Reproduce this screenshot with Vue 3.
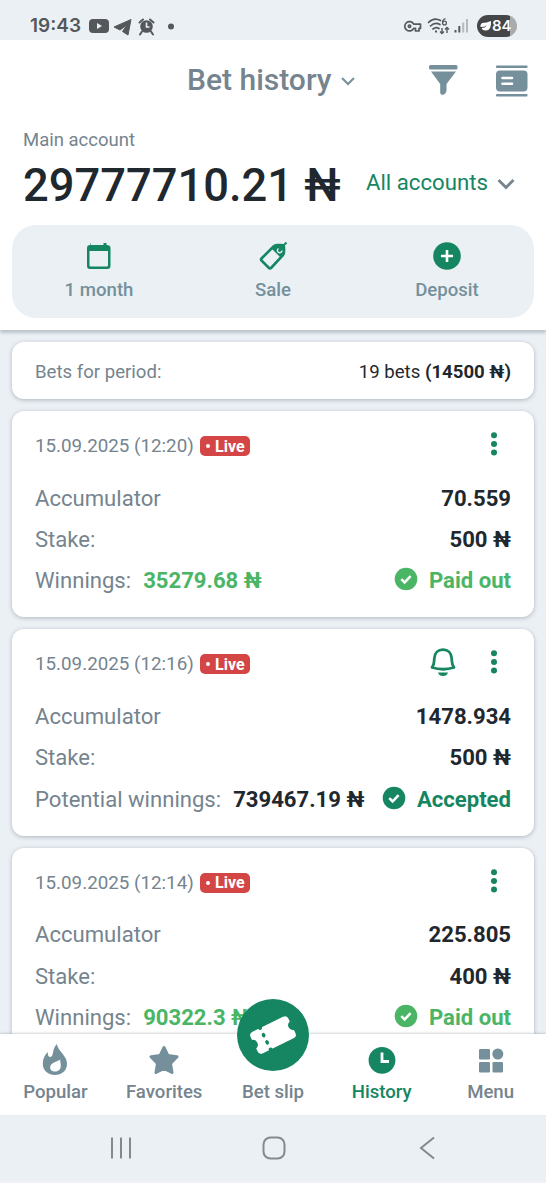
<script setup>
const bets = [
  { time: '12:20', odds: '70.559', stake: '500 ₦', label: 'Winnings:', sum: '35279.68 ₦', paid: true },
  { time: '12:16', odds: '1478.934', stake: '500 ₦', label: 'Potential winnings:', sum: '739467.19 ₦', paid: false },
  { time: '12:14', odds: '225.805', stake: '400 ₦', label: 'Winnings:', sum: '90322.3 ₦', paid: true },
]
</script>

<template>
  <div class="phone">
    <div class="status">
      <span class="clock">19:43</span>
      <svg class="st-left" width="90" height="24" viewBox="0 0 90 24" fill="#55585b">
        <rect x="1" y="5" width="20" height="14" rx="4" />
        <path d="M9 9l5 3-5 3z" fill="#ebf0f5" />
        <path d="M26 13L43 5.500 40 21 34.500 17.500 39 11 32 16z" stroke="#55585b" stroke-linejoin="round" />
        <circle cx="58.500" cy="12.500" r="6.300" />
        <path d="M54 17.500l-2 3M63 17.500l2 3M51.500 8.500l3.500-3M65.500 8.500l-3.500-3" stroke="#55585b" stroke-width="2" stroke-linecap="round" />
        <path d="M58.500 8.500v4.500h3" fill="none" stroke="#ebf0f5" stroke-width="1.600" />
        <circle cx="83" cy="12.500" r="3" />
      </svg>
      <svg class="st-right" width="72" height="24" viewBox="0 0 72 24" fill="none" stroke="#55585b" stroke-width="1.700">
        <path d="M12.700 10.200A4.700 4.700 0 1 0 12.700 14.300H14.500V17H18V14.300H19.500V10.200z" stroke-linejoin="round" />
        <circle cx="8.500" cy="12.200" r="1.200" />
        <path d="M27.500 8.500Q33 2.800 39.500 6.500M29.500 12Q34 7.500 39 10.500M32 15Q35 12.500 38 14.500" stroke-linecap="round" />
        <path d="M34 17.500h2" stroke-width="2" />
        <path d="M44.500 4.500Q41.500 5.500 41.500 8.500" stroke-width="1.300" /><circle cx="43.500" cy="9" r="1.900" stroke-width="1.300" />
        <path d="M41 14v5.500M39 17.500l2 2 2-2M46 19v-5.500M44 15.500l2-2 2 2" stroke-width="1.400" />
        <path d="M54.500 18.500V16M58.300 18.500V12" stroke-width="2" />
        <path d="M62.200 18.500V8.500M66 18.500V5" stroke="#b5babf" stroke-width="2" />
      </svg>
      <div class="battery">
        <svg width="13" height="14" viewBox="0 0 13 14" fill="#fff"><path d="M3 4Q8 4 12 2Q12.500 11.500 7 11.500Q3.500 11.800 2.500 9Q6 9 8 6.500Q5 8 1.500 8Q1 5.500 3 4z" /></svg>
        <span>84</span>
      </div>
    </div>

    <header class="top">
      <div class="titlebar">
        <span class="title">Bet history</span>
        <svg class="title-arrow" width="16" height="12" viewBox="0 0 16 12" fill="none" stroke="#75909b" stroke-width="2"><path d="M2 3l6 6 6-6" /></svg>
        <svg class="funnel" width="30" height="32" viewBox="0 0 30 32" fill="#75909b">
          <rect x="1" y="1" width="28.500" height="4.500" rx="1.500" />
          <path d="M3 7.500H28L18.500 20V26.500Q18 30 15 30.800Q12 31 12.200 28V20z" />
        </svg>
        <svg class="layout" width="32" height="32" viewBox="0 0 32 32" fill="#75909b">
          <rect x="0" y="0.500" width="31.500" height="2.500" rx=".8" /><rect x="0" y="29" width="31.500" height="2.500" rx=".8" />
          <rect x="0" y="5.500" width="31.500" height="21" rx="4" />
          <path d="M6.500 13H16M6.500 18.700H16" stroke="#fff" stroke-width="2.600" stroke-linecap="round" />
        </svg>
      </div>
      <div class="acc-label">Main account</div>
      <div class="acc-row">
        <span class="balance">29777710.21 ₦</span>
        <span class="all">All accounts</span>
        <svg class="all-arrow" width="18" height="14" viewBox="0 0 18 14" fill="none" stroke="#75848e" stroke-width="2.800"><path d="M1.500 3l7.500 7.500L16.500 3" /></svg>
      </div>
      <div class="actions">
        <div class="action">
          <svg width="30" height="32" viewBox="0 0 30 32" fill="#158661">
            <path fill-rule="evenodd" d="M6.500 3V5H19.500V3H22.500V5Q26.500 5 26.500 8V26Q26.500 29 23.500 29H6Q3 29 3 26V8Q3 5 6 5V3zM5.500 11V25.500Q5.500 26.500 6.500 26.500H23Q24 26.500 24 25.500V11z" />
          </svg>
          <span>1 month</span>
        </div>
        <div class="action">
          <svg width="32" height="32" viewBox="0 0 32 32">
            <path d="M4.500 18.500L16.500 6.500Q18 5 20 5H24Q27 5 27 8V12Q27 14 25.500 15.700L14.500 27.500Q13 29 11.500 27.500L4.500 20.500Q3.500 19.500 4.500 18.500z" fill="none" stroke="#158661" stroke-width="2.600" />
            <path d="M16 6H27V14L23.500 17.500L14.500 8.500z" fill="#158661" />
            <path d="M25 7l4.500-4.500" stroke="#158661" stroke-width="2" />
            <path d="M21.500 8.500A2.300 2.300 0 1 0 25 10.500" fill="none" stroke="#ebf0f5" stroke-width="1.400" />
          </svg>
          <span>Sale</span>
        </div>
        <div class="action">
          <svg width="32" height="32" viewBox="0 0 32 32"><circle cx="16" cy="16" r="13.800" fill="#158661" /><path d="M16 10v12M10 16h12" stroke="#fff" stroke-width="2.600" /></svg>
          <span>Deposit</span>
        </div>
      </div>
    </header>

    <main class="list">
      <div class="card period">
        <span class="muted">Bets for period:</span>
        <span class="period-sum">19 bets <b>(14500 ₦)</b></span>
      </div>
      <div v-for="b in bets" :key="b.time" class="card bet">
        <div class="bet-head">
          <span class="date">15.09.2025 ({{ b.time }})</span>
          <span class="live"><i></i>Live</span>
          <svg v-if="!b.paid" class="bell" width="28" height="30" viewBox="0 0 28 30">
            <path d="M3 20.500C5.500 17 5 15 5.300 11.500C5.600 6 9 2.700 14 2.700S22.400 6 22.700 11.500C23 15 22.500 17 25 20.500Q14 24 3 20.500z" fill="none" stroke="#158661" stroke-width="2.800" stroke-linejoin="round" />
            <path d="M9 25.500H19Q18 29 14 29T9 25.500z" fill="#158661" />
          </svg>
          <svg class="dots" width="8" height="26" viewBox="0 0 8 26" fill="#158661"><circle cx="4" cy="4.200" r="3" /><circle cx="4" cy="12.900" r="3" /><circle cx="4" cy="21.600" r="3" /></svg>
        </div>
        <div class="line"><span class="key">Accumulator</span><b>{{ b.odds }}</b></div>
        <div class="line"><span class="key">Stake:</span><b>{{ b.stake }}</b></div>
        <div class="line">
          <span class="key">{{ b.label }}</span>
          <b class="sum" :class="{ green: b.paid }">{{ b.sum }}</b>
          <span class="state" :class="b.paid ? 'green' : 'dark'">
            <svg width="24" height="24" viewBox="0 0 24 24"><circle cx="12" cy="12" r="11.300" fill="currentColor" /><path d="M7.300 12.200l3.300 3.200 6-6.200" fill="none" stroke="#fff" stroke-width="2.500" /></svg>
            <b>{{ b.paid ? 'Paid out' : 'Accepted' }}</b>
          </span>
        </div>
      </div>
    </main>

    <nav class="tabs">
      <div class="tab">
        <svg width="32" height="34" viewBox="0 0 32 34"><path fill-rule="evenodd" d="M18 1C18 7 28 12.500 28 20.500C28 28 22.500 32 16 32S3.800 28 3.800 20.500C3.800 15.500 6 12 8.800 9C8.600 12.500 9.500 14 11.300 14C15.300 13.500 12.500 6 18 1zM21.500 16.500C18 19 11.700 19.500 11.200 24C11 27 13 28.500 16 28.500C20 28.500 21.800 26 21.800 22.500C21.800 19.500 20.700 18.500 21.500 16.500z" fill="#75909b" /></svg>
        <span>Popular</span>
      </div>
      <div class="tab">
        <svg width="32" height="34" viewBox="0 0 32 34"><path d="M16 4.500L19.800 12.500 29 13.800 22.500 20.500 24 29.500 16 25.300 8 29.500 9.500 20.500 3 13.800 12.200 12.500z" fill="#75909b" stroke="#75909b" stroke-width="3" stroke-linejoin="round" /></svg>
        <span>Favorites</span>
      </div>
      <div class="tab">
        <div class="slip">
          <svg width="72" height="72" viewBox="0 0 72 72">
            <g transform="rotate(-26 36 36)">
              <path d="M19 24H53Q57 24 57 28V31.200A5 5 0 0 0 57 40.800V44Q57 48 53 48H19Q15 48 15 44V40.800A5 5 0 0 0 15 31.200V28Q15 24 19 24z" fill="#fff" />
              <g fill="#158661"><circle cx="27.500" cy="24" r="2" /><ellipse cx="27.500" cy="32" rx="1.800" ry="2.400" /><ellipse cx="27.500" cy="40" rx="1.800" ry="2.400" /><circle cx="27.500" cy="48" r="2" /></g>
            </g>
          </svg>
        </div>
        <span>Bet slip</span>
      </div>
      <div class="tab active">
        <svg width="32" height="34" viewBox="0 0 32 34"><circle cx="16" cy="17.300" r="13.400" fill="#158661" /><path d="M16 9.500V18.500H23" fill="none" stroke="#fff" stroke-width="2.800" /></svg>
        <span>History</span>
      </div>
      <div class="tab">
        <svg width="32" height="34" viewBox="0 0 32 34" fill="#75909b"><rect x="4" y="6" width="11" height="10.500" rx="1.200" /><circle cx="22.800" cy="11" r="5.500" /><rect x="4" y="19" width="11" height="10.500" rx="1.200" /><rect x="17.500" y="19" width="10.500" height="10.500" rx="1.200" /></svg>
        <span>Menu</span>
      </div>
    </nav>

    <footer class="sys">
      <svg width="24" height="24" viewBox="0 0 24 24" stroke="#85898d" stroke-width="2"><path d="M3 1.500v21M12 1.500v21M21 1.500v21" /></svg>
      <svg width="24" height="24" viewBox="0 0 24 24" fill="none" stroke="#85898d" stroke-width="2"><rect x="1.500" y="1.500" width="21" height="21" rx="7" /></svg>
      <svg width="24" height="24" viewBox="0 0 24 24" fill="none" stroke="#85898d" stroke-width="2"><path d="M19 1.500L6 12l13 10.500" /></svg>
    </footer>
  </div>
</template>

<style>
body { background: #ebf0f5; }
</style>

<style scoped>
.phone { width: 546px; height: 1183px; display: flex; flex-direction: column; overflow: hidden; background: #ebf0f5; font-family: Roboto, "Liberation Sans", sans-serif; color: #1f282e; white-space: nowrap; }
svg { display: block; flex: none; }
b { font-weight: 700; }
.status { height: 40px; flex: none; display: flex; align-items: center; padding: 11px 29px 0 30px; box-sizing: border-box; color: #55585b; }
.clock { font: 600 19px/24px Inter, sans-serif; width: 58px; }
.st-right { margin-left: auto; margin-right: 4px; }
.battery { width: 40px; height: 22px; border-radius: 11px; background: linear-gradient(90deg, #444648 33px, #a9abad 33px); color: #fff; display: flex; align-items: center; padding-left: 2px; box-sizing: border-box; font: 600 15px/22px Inter, sans-serif; }
.top { height: 290px; flex: none; background: #fff; box-sizing: border-box; padding: 0 12px; box-shadow: 0 3px 3px rgba(80, 95, 105, .3); position: relative; }
.titlebar { height: 79px; display: flex; align-items: center; padding-left: 175px; }
.title { font-size: 30px; font-weight: 500; color: #75848e; width: 153px; }
.title-arrow { margin-top: 2px; }
.funnel { margin-left: 72px; margin-top: 1px; }
.layout { margin-left: 38px; margin-top: 2px; }
.acc-label { padding-left: 11px; font-size: 18.500px; line-height: 24px; height: 24px; margin-top: 9px; color: #75848e; }
.acc-row { display: flex; align-items: center; height: 66px; padding-left: 11px; }
.balance { font-size: 45.300px; font-weight: 500; width: 343px; }
.all { font-size: 22.200px; color: #158661; width: 131px; margin-top: -6px; }
.all-arrow { margin-top: -3px; }
.actions { height: 93px; margin-top: 7px; border-radius: 24px; background: #ebf0f5; display: flex; }
.action { flex: 1; display: flex; flex-direction: column; align-items: center; padding-top: 15px; font-size: 18.600px; line-height: 24px; font-weight: 500; color: #75909b; }
.action span { margin-top: 6px; }
.list { flex: 1; min-height: 0; overflow: hidden; display: flex; flex-direction: column; gap: 12px; padding: 12px 12px 0; }
.card { background: #fff; border-radius: 12px; box-shadow: 0 1px 4px rgba(80, 95, 105, .4); box-sizing: border-box; padding: 0 23px; flex: none; }
.period { height: 57px; display: flex; align-items: center; justify-content: space-between; font-size: 18.600px; padding-top: 2px; }
.muted, .key, .date { color: #75848e; }
.bet { height: 206.400px; padding-top: 11px; }
.bet-head { display: flex; align-items: center; height: 48px; margin-bottom: 7px; }
.date { font-size: 18.800px; width: 165px; }
.live { display: flex; align-items: center; gap: 5px; width: 50px; height: 20px; border-radius: 5px; background: #d44545; color: #fff; font-size: 16px; font-weight: 700; padding-left: 6px; box-sizing: border-box; }
.live i { width: 4px; height: 4px; border-radius: 50%; background: #fff; }
.bell { margin-left: 179px; margin-top: -4px; }
.dots { margin-left: auto; margin-right: 13px; margin-top: -4px; }
.line { display: flex; align-items: center; justify-content: space-between; height: 41.400px; font-size: 22.100px; }
.sum { margin-left: 12px; margin-right: auto; }
.state { display: flex; align-items: center; gap: 11px; }
.state svg { margin-top: -2px; }
.green { color: #4bb566; }
.dark { color: #158661; }
.tabs { height: 81px; flex: none; background: #fff; display: flex; box-shadow: 0 -1px 2px rgba(80, 95, 105, .25); position: relative; padding: 0 1px; }
.tab { flex: 1; display: flex; flex-direction: column; align-items: center; justify-content: flex-end; padding-bottom: 11px; font-size: 18.600px; line-height: 24px; font-weight: 500; color: #75848e; }
.tab > svg { margin-bottom: 3px; }
.active { color: #158661; }
.slip { width: 72px; height: 72px; border-radius: 50%; background: #158661; margin-bottom: 9px; }
.sys { height: 68px; flex: none; display: flex; align-items: center; justify-content: space-between; padding: 0 107px 0 109px; box-sizing: border-box; border-bottom: 2px solid #f1effa; }
</style>
